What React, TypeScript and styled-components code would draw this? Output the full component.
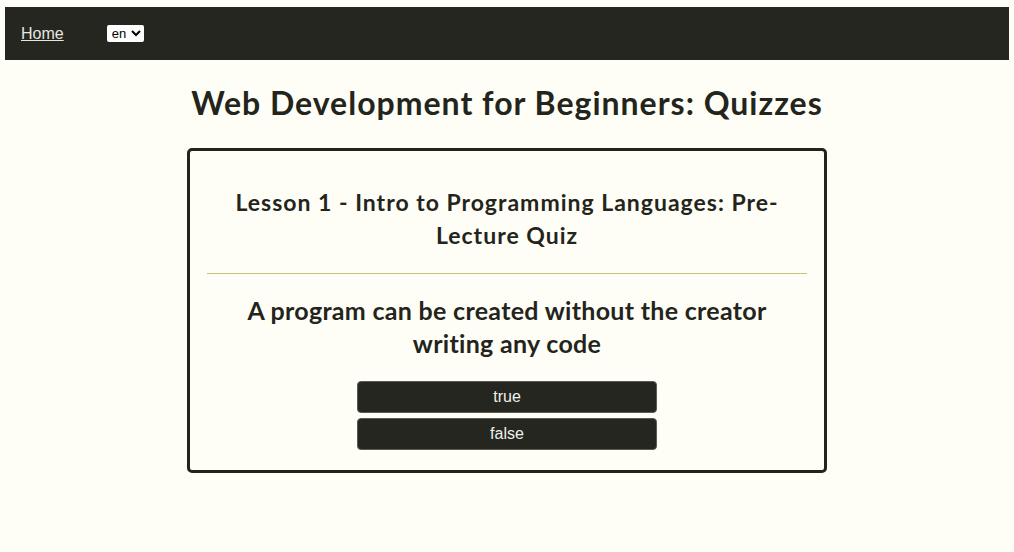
import styled, { createGlobalStyle } from 'styled-components';

const GlobalStyle = createGlobalStyle`
    body {
        margin: 0;
        background: #fffef6;
        font-family: "Liberation Sans", Arial, sans-serif;
    }
`;

const Page = styled.div`
    padding: 7px 5px 0 5px;
    display: flex;
    flex-direction: column;
    align-items: center;
`;

const NavBar = styled.nav`
    width: 100%;
    height: 53px;
    box-sizing: border-box;
    background: #24261f;
    display: flex;
    align-items: center;
    padding-left: 16px;
    gap: 43px;
    a {
        color: #e6e6e0;
        font-size: 16px;
        text-decoration: underline;
        margin-top: 1px;
    }
    select {
        font-family: "Liberation Sans", Arial, sans-serif;
        font-size: 13px;
        height: 17px;
        padding: 0 1px;
        border: none;
        border-radius: 2px;
        background: #fff;
        color: #000;
    }
`;

const Title = styled.h1`
    margin: 23px 0 26px;
    font-family: Lato, "Noto Sans", sans-serif;
    font-weight: 700;
    font-size: 32px;
    letter-spacing: 1px;
    color: #23251c;
`;

const Card = styled.div`
    width: 640px;
    box-sizing: border-box;
    border: 3px solid #22241c;
    border-radius: 5px;
    padding: 0 17px 15px;
    display: flex;
    flex-direction: column;
    align-items: center;
    color: #23251c;
    font-family: Lato, "Noto Sans", sans-serif;
`;

const Lesson = styled.h2`
    margin: 35px 0 21px;
    font-size: 23px;
    line-height: 33px;
    font-weight: 700;
    letter-spacing: 1px;
    text-align: center;
    max-width: 580px;
`;

const Divider = styled.hr`
    width: 100%;
    margin: 0;
    border: none;
    border-top: 1px solid #c9c37a;
`;

const Question = styled.h3`
    margin: 20px 0 21px;
    font-size: 25px;
    line-height: 33px;
    font-weight: 700;
    letter-spacing: 0.3px;
    text-align: center;
    max-width: 560px;
`;

const Answer = styled.button`
    width: 300px;
    height: 32px;
    margin-bottom: 5px;
    border: 1px solid #5a5b53;
    border-radius: 4px;
    background: #24261f;
    color: #f0f0ea;
    font-family: "Liberation Sans", Arial, sans-serif;
    font-size: 16px;
`;

export default function App() {
    return (
        <>
            <GlobalStyle />
            <Page>
                <NavBar>
                    <a href="#">Home</a>
                    <select defaultValue="en">
                        <option value="en">en</option>
                    </select>
                </NavBar>
                <Title>Web Development for Beginners: Quizzes</Title>
                <Card>
                    <Lesson>Lesson 1 - Intro to Programming Languages: Pre-Lecture Quiz</Lesson>
                    <Divider />
                    <Question>A program can be created without the creator writing any code</Question>
                    <Answer>true</Answer>
                    <Answer>false</Answer>
                </Card>
            </Page>
        </>
    );
}
